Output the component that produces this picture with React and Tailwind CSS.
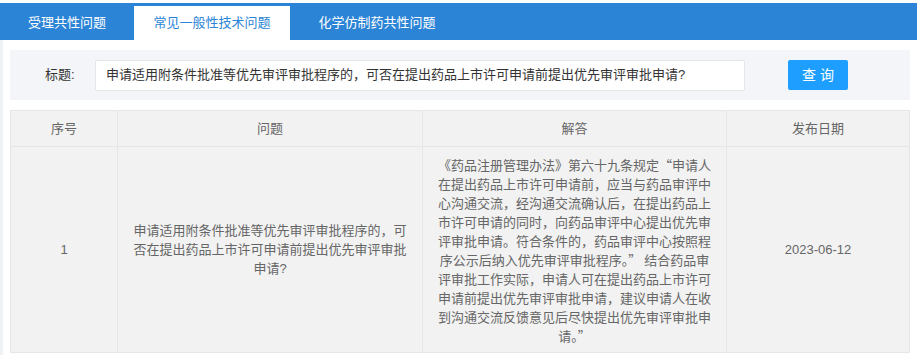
import React from "react";

const tabs = ["受理共性问题", "常见一般性技术问题", "化学仿制药共性问题"];

const question = [
  "申请适用附条件批准等优先审评审批程序的，可",
  "否在提出药品上市许可申请前提出优先审评审批",
  "申请?",
];

const answer = [
  "《药品注册管理办法》第六十九条规定“申请人",
  "在提出药品上市许可申请前，应当与药品审评中",
  "心沟通交流，经沟通交流确认后，在提出药品上",
  "市许可申请的同时，向药品审评中心提出优先审",
  "评审批申请。符合条件的，药品审评中心按照程",
  "序公示后纳入优先审评审批程序。” 结合药品审",
  "评审批工作实际，申请人可在提出药品上市许可",
  "申请前提出优先审评审批申请，建议申请人在收",
  "到沟通交流反馈意见后尽快提出优先审评审批申",
  "请。”",
];

export default function App() {
  const active = 1;

  return (
    <div className="w-[917px] h-[355px] overflow-hidden bg-white pt-[3px] font-['Liberation_Sans','Noto_Sans_CJK_SC',sans-serif]">
      {/* tab bar */}
      <div className="h-[37px] bg-[#2b84d6] flex items-end">
        {tabs.map((t, i) => (
          <div
            key={t}
            className={
              i === active
                ? "h-[34px] w-[156px] flex items-center justify-center bg-white text-[#2b84d6] text-[13px]"
                : i === 0
                ? "h-[34px] w-[134px] flex items-center justify-center text-white text-[13px]"
                : "h-[34px] w-[174px] flex items-center justify-center text-white text-[13px]"
            }
          >
            {t}
          </div>
        ))}
      </div>

      <div className="flex h-full">
        <div className="w-[3px] bg-[#eef2f6]" />
        <div className="pl-[7px]">
          {/* search */}
          <div className="mt-[10px] w-[900px] h-[50px] bg-[#f4f5f8] flex items-center">
            <span className="ml-[35px] w-[33px] text-[13px] text-[#333]">标题:</span>
            <div className="ml-[17px] w-[650px] h-[31px] bg-white border border-[#e6e6e6] rounded-[2px] px-[10px] flex items-center text-[13px] text-[#333] whitespace-nowrap overflow-hidden">
              申请适用附条件批准等优先审评审批程序的，可否在提出药品上市许可申请前提出优先审评审批申请?
            </div>
            <button className="ml-[43px] w-[60px] h-[30px] bg-[#1e9fff] rounded-[2px] text-white text-[14px]">
              查 询
            </button>
          </div>

          {/* table */}
          <table className="mt-[10px] w-[899px] border-collapse table-fixed text-[13px] text-[#666] bg-[#f2f2f2]">
            <colgroup>
              <col className="w-[107px]" />
              <col className="w-[305px]" />
              <col className="w-[304px]" />
              <col className="w-[183px]" />
            </colgroup>
            <thead>
              <tr className="h-[36px]">
                {["序号", "问题", "解答", "发布日期"].map((h) => (
                  <th key={h} className="border border-[#e6e6e6] font-normal text-center">
                    {h}
                  </th>
                ))}
              </tr>
            </thead>
            <tbody>
              <tr className="h-[206px]">
                <td className="border border-[#e6e6e6] text-center">1</td>
                <td className="border border-[#e6e6e6] text-center px-[15px] leading-[19px]">
                  {question.map((l) => (
                    <span key={l} className="block whitespace-nowrap">{l}</span>
                  ))}
                </td>
                <td className="border border-[#e6e6e6] text-center px-[10px] py-[7px] leading-[19px] font-['Noto_Sans_CJK_SC',sans-serif]">
                  {answer.map((l) => (
                    <span key={l} className="block whitespace-nowrap">{l}</span>
                  ))}
                </td>
                <td className="border border-[#e6e6e6] text-center">2023-06-12</td>
              </tr>
            </tbody>
          </table>
        </div>
      </div>
    </div>
  );
}
